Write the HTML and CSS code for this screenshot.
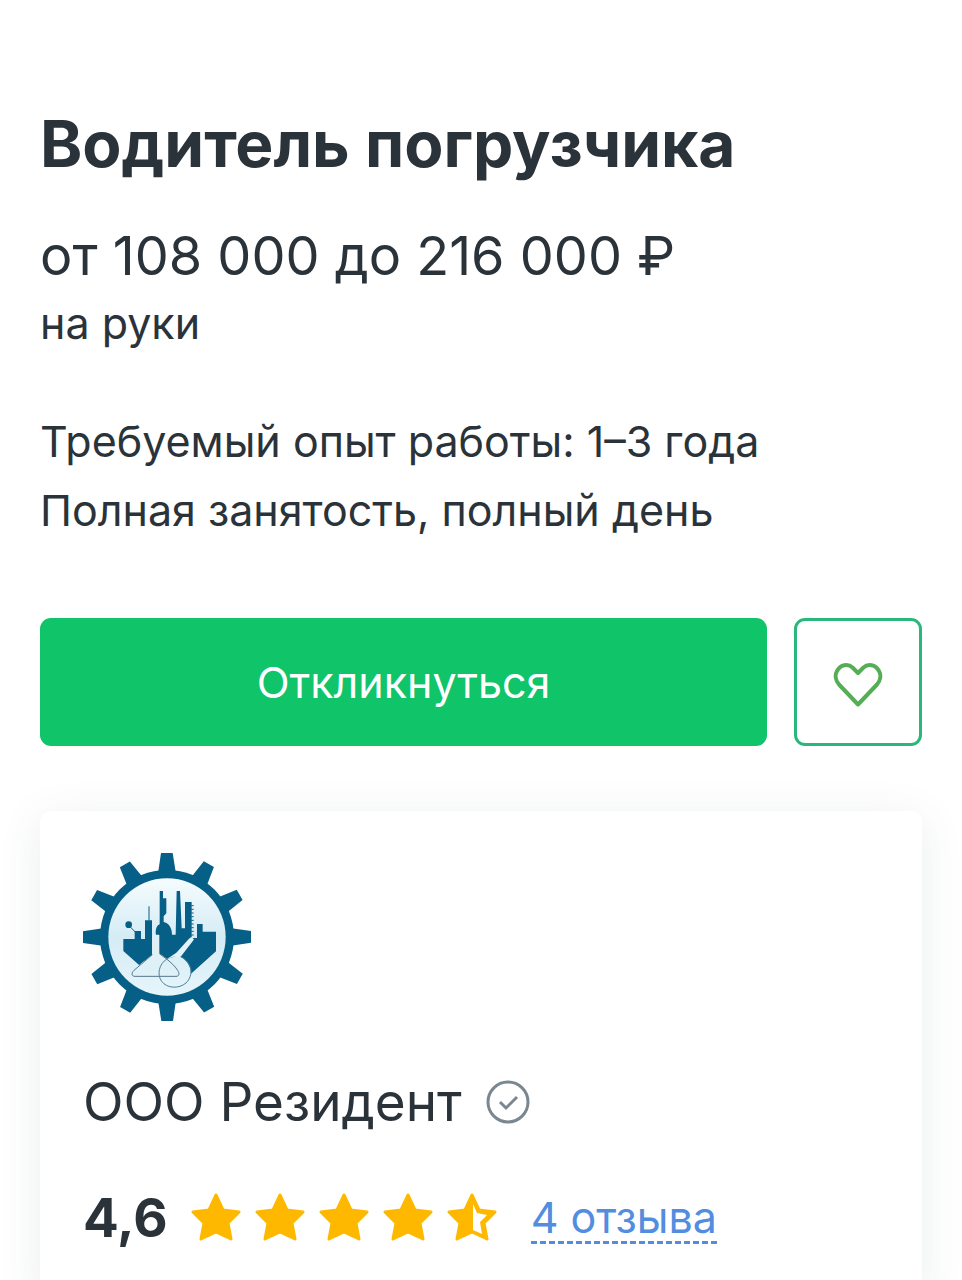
FILE: index.html
```html
<!DOCTYPE html>
<html lang="ru">

<head>
    <meta charset="UTF-8" />
    <meta name="viewport" content="width=device-width, initial-scale=1.0" />
    <title>Водитель погрузчика</title>
    <link rel="stylesheet" href="styles.css">
</head>

<body>
    <main class="vacancy">
        <h1 class="vacancy-title">Водитель погрузчика</h1>

        <div class="salary">
            <p class="salary-amount">от 108 000 до 216 000 ₽</p>
            <p class="salary-note">на руки</p>
        </div>

        <div class="conditions">
            <p>Требуемый опыт работы: 1–3 года</p>
            <p>Полная занятость, полный день</p>
        </div>

        <div class="actions">
            <button class="btn btn-primary" type="button">Откликнуться</button>
            <button class="btn btn-favorite" type="button" aria-label="В избранное">
                <svg class="heart" viewBox="0 -5 50 50" aria-hidden="true">
                    <path d="M25 42.500 L6 22.500 C2.500 18.500 1.700 13 4 9 C7.500 2.500 15 1.500 19.500 5.500 L25 11 L30.500 5.500 C35 1.500 42.500 2.500 46 9 C48.300 13 47.500 18.500 44 22.500 Z" />
                </svg>
            </button>
        </div>

        <section class="company">
            <svg class="logo" viewBox="39 39 504 504" aria-hidden="true">
                <defs>
                    <linearGradient id="sky" x1="0" y1="0" x2="0" y2="1">
                        <stop offset="0" stop-color="#f5fcfe" />
                        <stop offset="0.5" stop-color="#d5ecf5" />
                        <stop offset="1" stop-color="#e6f5fa" />
                    </linearGradient>
                    <path id="tooth" d="M273 39 H308 L319 108 H263 Z" />
                </defs>
                <!-- gear -->
                <g fill="#065f87">
                    <use href="#tooth" />
                    <use href="#tooth" transform="rotate(30 291 291)" />
                    <use href="#tooth" transform="rotate(60 291 291)" />
                    <use href="#tooth" transform="rotate(90 291 291)" />
                    <use href="#tooth" transform="rotate(120 291 291)" />
                    <use href="#tooth" transform="rotate(150 291 291)" />
                    <use href="#tooth" transform="rotate(180 291 291)" />
                    <use href="#tooth" transform="rotate(210 291 291)" />
                    <use href="#tooth" transform="rotate(240 291 291)" />
                    <use href="#tooth" transform="rotate(270 291 291)" />
                    <use href="#tooth" transform="rotate(300 291 291)" />
                    <use href="#tooth" transform="rotate(330 291 291)" />
                    <circle cx="291" cy="291" r="201" />
                </g>
                <circle cx="291" cy="291" r="176" fill="url(#sky)" />
                <!-- factory -->
                <g fill="#065f87">
                    <path d="M160 297 H194 V273 H213 V297 H225 V241 H246 V345 L208 376 L160 333 Z" />
                    <path d="M258 285 C255 266 262 255 269 253 V153 H279 V175 H289 V220 L281 229 V246 C294 249 306 260 306 284 H317 L320 153 H330 L335 265 H345 V186 H365 V294 L330 344 L291 357 L268 340 V285 Z" />
                    <path d="M364 294 L381 294 V252 H398 V275 H438 V334 L363 401 C363 378 350 360 331 350 Z" />
                    <circle cx="176" cy="254" r="10" />
                </g>
                <g fill="none" stroke="#065f87" stroke-width="3">
                    <path d="M180 260 L196 276" />
                    <path d="M237 199 V242" />
                    <path d="M364 197 H371 M364 208 H371 M364 219 H371 M364 230 H371 M364 241 H371 M364 252 H371 M364 263 H371 M364 274 H371 M364 285 H371" />
                </g>
                <!-- flasks -->
                <path d="M247 284 H267 V341 L291 357 L281 374 L223 377 L208 374 L247 344 Z" fill="#dff1f7" />
                <path d="M357 296 L364 291 L372 298 L368 304 L332 350 L310 350 L291 357 L319 338 Z" fill="#e3f3f9" />
                <path d="M247 344 L192 391 C182 402 186 409 195 409 H318 C328 409 329 401 323 391 C314 377 303 368 291 358 L268 341" fill="none" stroke="#55758b" stroke-width="3" />
                <path d="M291 357 C267 371 260 404 275 424 C291 446 327 447 348 429 C372 406 367 367 332 350" fill="none" stroke="#4d829b" stroke-width="3" />
            </svg>

            <h2 class="company-name">
                ООО Резидент
                <svg class="verified" viewBox="0 0 44 44" role="img" aria-label="Проверенная компания">
                    <circle cx="22" cy="22" r="20" />
                    <path d="M14 22 L20 28 L31 17" />
                </svg>
            </h2>

            <div class="rating">
                <span class="rating-value">4,6</span>
                <svg class="stars" viewBox="0 1 306 50" role="img" aria-label="4,6 из 5">
                    <defs>
                        <path id="star" d="M25 3 L32 18 L48 20 L37 31 L40 47 L25 40 L10 47 L13 31 L2 20 L18 18 Z" />
                    </defs>
                    <use href="#star" />
                    <use href="#star" x="64" />
                    <use href="#star" x="128" />
                    <use href="#star" x="192" />
                    <use href="#star" x="256" />
                    <path class="star-empty" d="M282 12 L286 21 L296 23 L289 30 L291 42 L282 38 Z" />
                </svg>
                <a class="reviews" href="#">4 отзыва</a>
            </div>
        </section>
    </main>
</body>

</html>
```
FILE: styles.css
```css
* {
    margin: 0;
    padding: 0;
    box-sizing: border-box;
}

body {
    font-family: Inter, 'Liberation Sans', sans-serif;
    font-size: 43px;
    color: #2b333a;
    background: #fff;
    overflow-x: hidden;
}

.vacancy {
    padding: 107px 40px 0;
}

.vacancy-title {
    font-size: 64px;
    line-height: 74px;
    font-weight: 700;
    margin-bottom: 40px;
}

.salary {
    margin-bottom: 52px;
}

.salary-amount {
    font-size: 54px;
    line-height: 70px;
}

.salary-note {
    line-height: 64px;
}

.conditions {
    line-height: 69px;
    margin-bottom: 73px;
}

.actions {
    display: flex;
    gap: 27px;
    margin-bottom: 65px;
}

.btn {
    height: 128px;
    border: none;
    border-radius: 11px;
    font-family: inherit;
    font-size: 43px;
    cursor: pointer;
}

.btn-primary {
    flex: 1;
    background: #10c469;
    color: #fff;
}

.btn-favorite {
    display: flex;
    align-items: center;
    justify-content: center;
    width: 128px;
    background: #fff;
    border: 3px solid #2bb67a;
}

.heart {
    width: 50px;
    height: 50px;
    fill: none;
    stroke: #55ae55;
    stroke-width: 4;
    stroke-linejoin: round;
}

.company {
    padding: 42px 43px;
    border-radius: 11px;
    background: #fff;
    box-shadow: 0 8px 43px rgba(60, 80, 90, 0.1);
}

.logo {
    display: block;
    width: 168px;
    height: 168px;
    margin-bottom: 46px;
}

.company-name {
    display: flex;
    align-items: center;
    gap: 24px;
    font-size: 53px;
    line-height: 70px;
    font-weight: 400;
    margin-bottom: 46px;
}

.verified {
    width: 44px;
    height: 44px;
    fill: none;
    stroke: #7b8790;
    stroke-width: 3;
}

.rating {
    display: flex;
    align-items: center;
}

.rating-value {
    font-size: 53px;
    line-height: 70px;
    font-weight: 700;
}

.stars {
    width: 306px;
    height: 50px;
    margin: 0 34px 0 23px;
    fill: #ffb800;
    stroke: #ffb800;
    stroke-width: 3;
    stroke-linejoin: round;
}

.star-empty {
    fill: #fff;
    stroke: none;
}

.reviews {
    line-height: 48px;
    color: #528de0;
    text-decoration: none;
    border-bottom: 3px dashed #528de0;
}
```
